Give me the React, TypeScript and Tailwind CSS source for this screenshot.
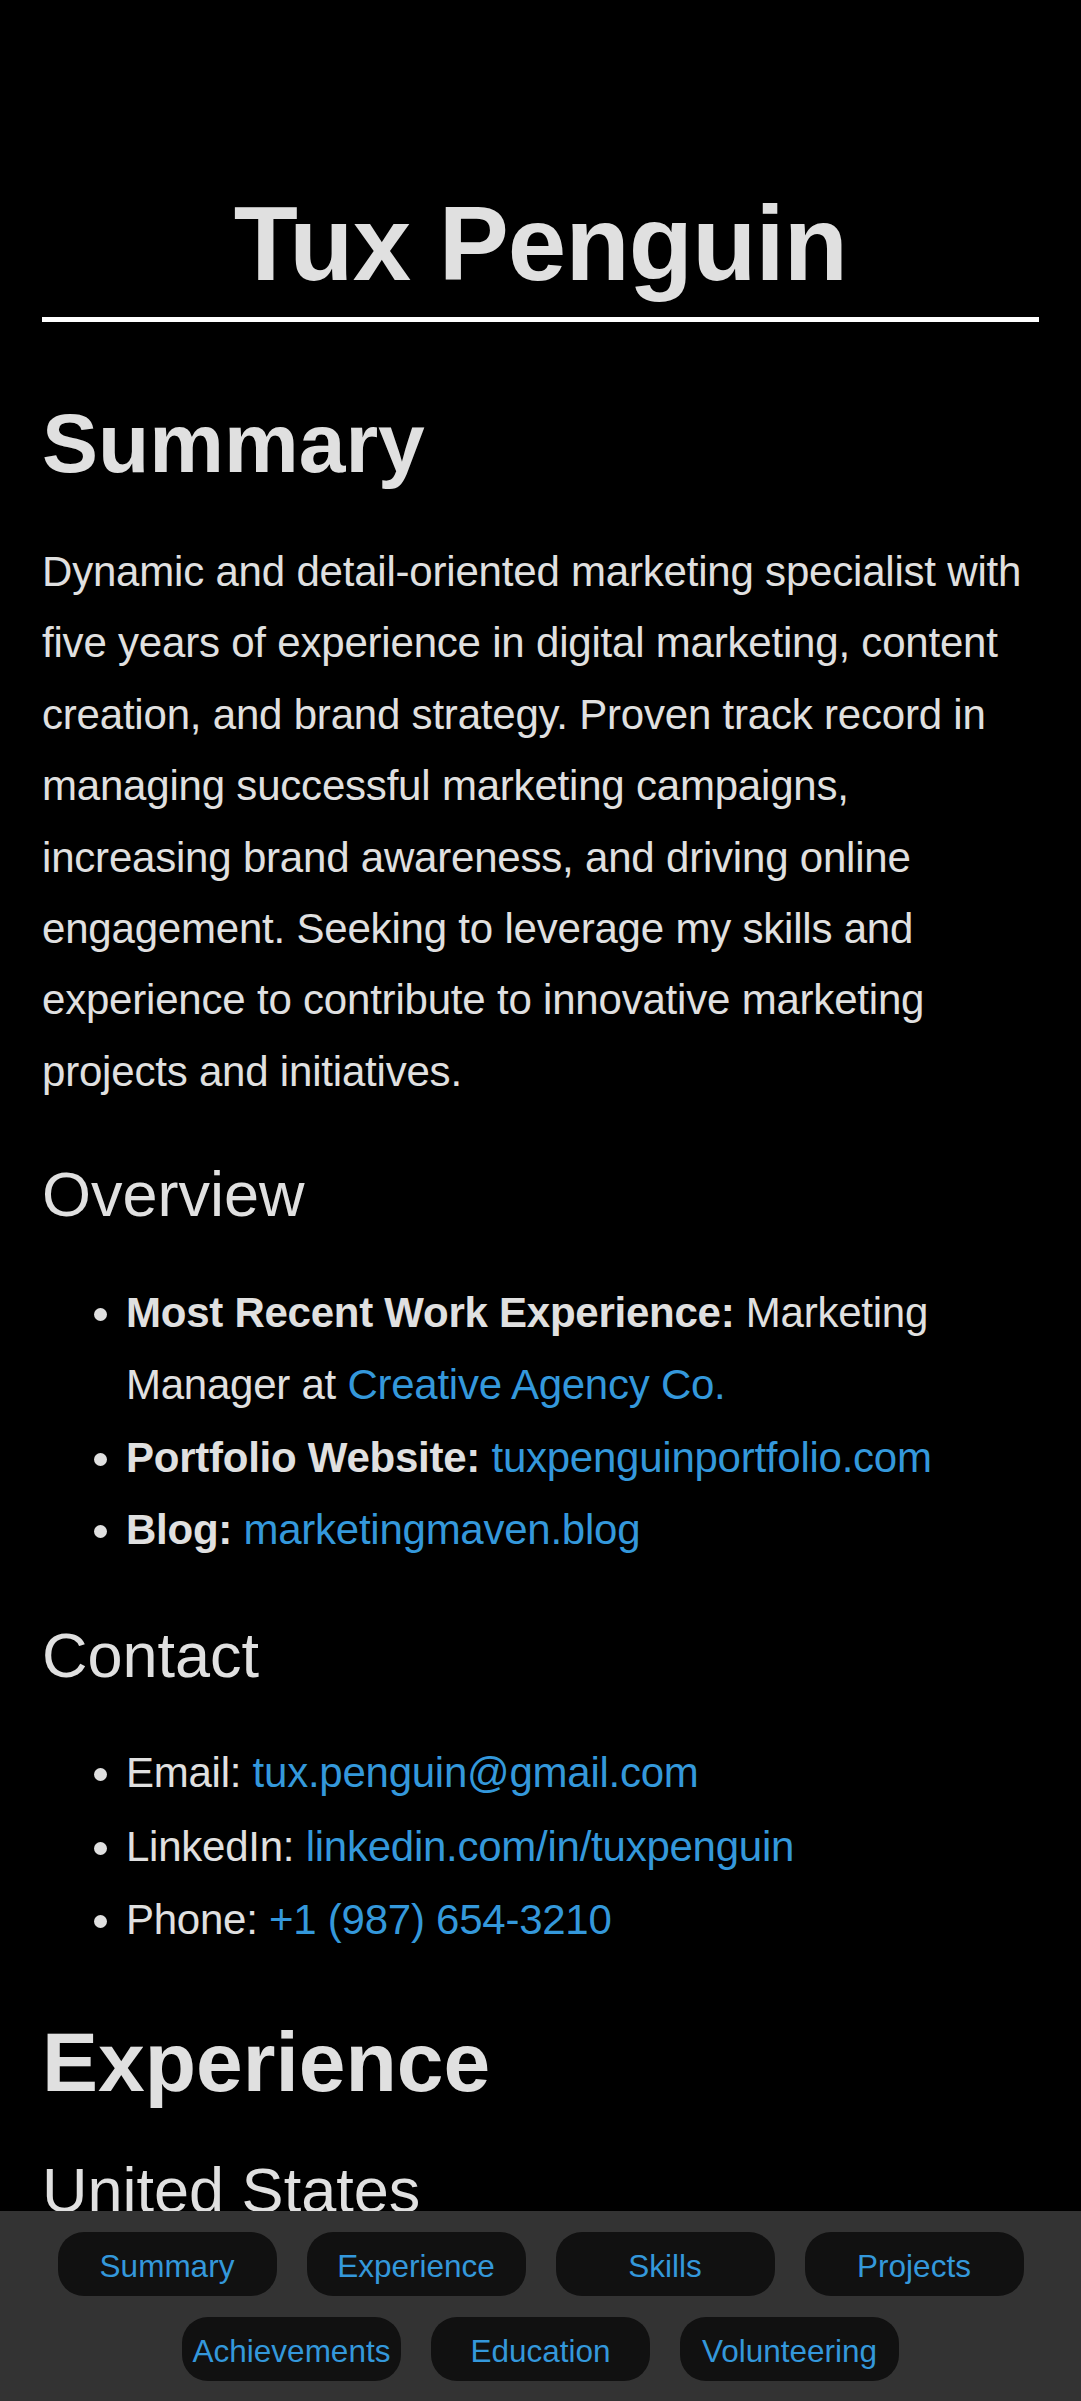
const navItems = [
  "Summary",
  "Experience",
  "Skills",
  "Projects",
  "Achievements",
  "Education",
  "Volunteering",
];

function Link({ children }: { children: React.ReactNode }) {
  return (
    <a href="#" className="text-[#3498db] no-underline">
      {children}
    </a>
  );
}

export default function App() {
  return (
    <div className="flex h-screen flex-col overflow-hidden bg-black font-['Liberation_Sans',Arial,sans-serif] text-[#e0e0e0]">
      <main className="flex-1 overflow-hidden px-[42px]">
        <h1 className="mt-[183px] border-b-[5px] border-white pb-[13px] text-center text-[105px] font-bold leading-[121px] tracking-[-0.8px]">
          Tux Penguin
        </h1>

        <h2 className="mt-[71px] text-[84px] font-bold leading-[101px]">Summary</h2>
        <p className="mt-[42px] text-[42px] leading-[1.7] tracking-[-0.2px]">
          Dynamic and detail-oriented marketing specialist with five years of
          experience in digital marketing, content creation, and brand strategy.
          Proven track record in managing successful marketing campaigns,
          increasing brand awareness, and driving online engagement. Seeking to
          leverage my skills and experience to contribute to innovative marketing
          projects and initiatives.
        </p>

        <h3 className="mt-[49px] text-[63px] font-normal leading-[76px]">Overview</h3>
        <ul className="mt-[44.5px] list-disc pl-[84px] text-[42px] leading-[72.5px] tracking-[-0.25px]">
          <li>
            <strong className="font-bold">Most Recent Work Experience:</strong>{" "}
            Marketing Manager at <Link>Creative Agency Co.</Link>
          </li>
          <li>
            <strong className="font-bold">Portfolio Website:</strong>{" "}
            <Link>tuxpenguinportfolio.com</Link>
          </li>
          <li>
            <strong className="font-bold">Blog:</strong> <Link>marketingmaven.blog</Link>
          </li>
        </ul>

        <h3 className="mt-[50px] text-[63px] font-normal leading-[76px]">Contact</h3>
        <ul className="mt-[43.5px] list-disc pl-[84px] text-[42px] leading-[73.5px] tracking-[-0.25px]">
          <li>
            Email: <Link>tux.penguin@gmail.com</Link>
          </li>
          <li>
            LinkedIn: <Link>linkedin.com/in/tuxpenguin</Link>
          </li>
          <li>
            Phone: <Link>+1 (987) 654-3210</Link>
          </li>
        </ul>

        <h2 className="mt-[55px] text-[84px] font-bold leading-[101px]">Experience</h2>
        <h3 className="mt-[39px] text-[63px] font-normal leading-[76px]">United States</h3>
      </main>

      <nav className="flex shrink-0 flex-wrap justify-center gap-x-[30px] gap-y-[21px] bg-[#333] pb-[20px] pt-[21px]">
        {navItems.map((item) => (
          <a
            key={item}
            href="#"
            className="flex h-[64px] w-[219px] items-center justify-center rounded-[26px] bg-[#111] pt-[6px] text-[31.5px] text-[#3498db]"
          >
            {item}
          </a>
        ))}
      </nav>
    </div>
  );
}
